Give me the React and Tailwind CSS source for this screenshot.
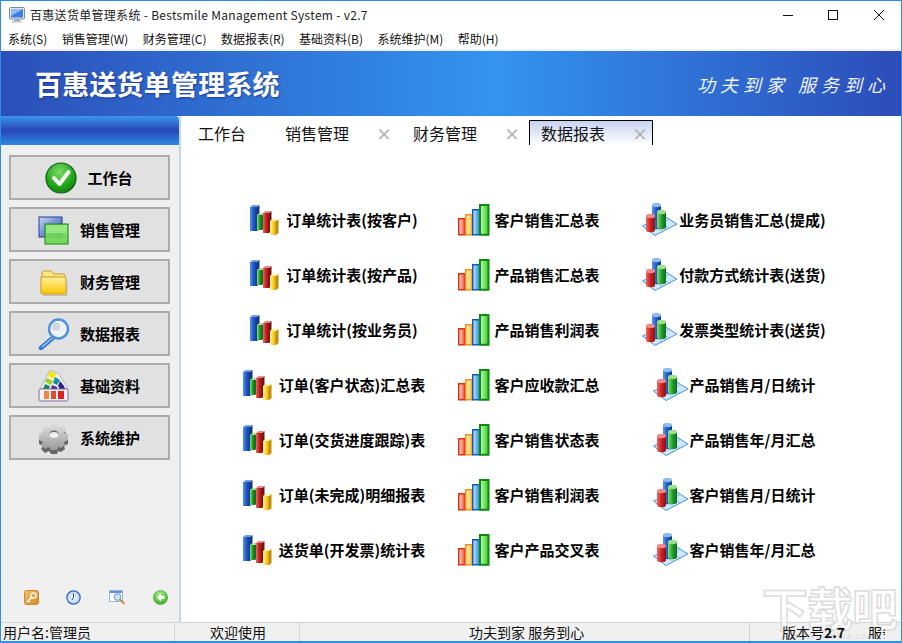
import React from "react";

const Defs = () => (
  <svg className="absolute w-0 h-0" aria-hidden="true">
    <defs>
      <linearGradient id="gBlue" x1="0" x2="1" y1="0" y2="0"><stop offset="0" stopColor="#5c94e8" /><stop offset="0.5" stopColor="#1f58c4" /><stop offset="1" stopColor="#123a94" /></linearGradient>
      <linearGradient id="gGreen" x1="0" x2="1" y1="0" y2="0"><stop offset="0" stopColor="#86e070" /><stop offset="0.55" stopColor="#1d9a28" /><stop offset="1" stopColor="#0c6c24" /></linearGradient>
      <linearGradient id="gRed" x1="0" x2="1" y1="0" y2="0"><stop offset="0" stopColor="#ea6a6a" /><stop offset="0.5" stopColor="#cc2020" /><stop offset="1" stopColor="#861414" /></linearGradient>
      <linearGradient id="gYellow" x1="0" x2="1" y1="0" y2="0"><stop offset="0" stopColor="#fff4a0" /><stop offset="0.6" stopColor="#fcd020" /><stop offset="1" stopColor="#d09a10" /></linearGradient>
      <linearGradient id="fRed" x1="0" x2="1" y1="0" y2="0"><stop offset="0" stopColor="#ffe8e0" /><stop offset="1" stopColor="#f03c24" /></linearGradient>
      <linearGradient id="fOrange" x1="0" x2="1" y1="0" y2="0"><stop offset="0" stopColor="#fff8d0" /><stop offset="1" stopColor="#ffbe30" /></linearGradient>
      <linearGradient id="fBlue" x1="0" x2="1" y1="0" y2="0"><stop offset="0" stopColor="#d8eeff" /><stop offset="1" stopColor="#1f80e8" /></linearGradient>
      <linearGradient id="fGreen" x1="0" x2="1" y1="0" y2="0"><stop offset="0" stopColor="#c8fcb8" /><stop offset="1" stopColor="#30cc20" /></linearGradient>
      <radialGradient id="gCheck" cx="0.45" cy="0.3" r="0.8"><stop offset="0" stopColor="#7fdc6a" /><stop offset="0.6" stopColor="#20a518" /><stop offset="1" stopColor="#0c7010" /></radialGradient>
      <linearGradient id="gFolder" x1="0" x2="0" y1="0" y2="1"><stop offset="0" stopColor="#fff2a0" /><stop offset="1" stopColor="#ffc400" /></linearGradient>
      <linearGradient id="gWin1" x1="0" x2="1" y1="0" y2="1"><stop offset="0" stopColor="#c8d6f6" /><stop offset="1" stopColor="#2448b4" /></linearGradient>
      <linearGradient id="gGear" x1="0" x2="0" y1="0" y2="1"><stop offset="0" stopColor="#e2e2e2" /><stop offset="1" stopColor="#9a9a9a" /></linearGradient>
      <linearGradient id="gKey" x1="0" x2="1" y1="0" y2="1"><stop offset="0" stopColor="#f4c070" /><stop offset="1" stopColor="#d88a20" /></linearGradient>
      <radialGradient id="gClock" cx="0.5" cy="0.5" r="0.6"><stop offset="0" stopColor="#f4f8ff" /><stop offset="0.7" stopColor="#c4d8f6" /><stop offset="1" stopColor="#3a70d0" /></radialGradient>
      <radialGradient id="gBack" cx="0.45" cy="0.3" r="0.8"><stop offset="0" stopColor="#b0f090" /><stop offset="1" stopColor="#28a818" /></radialGradient>
    </defs>
  </svg>
);

const Bar3D = ({ x, y1, y2, w, fill, side, top }) => (
  <g>
    <rect x={x} y={y1} width={w} height={y2 - y1} fill={`url(#${fill})`} />
    <path d={`M${x + w} ${y1}l2.5 -2v${y2 - y1}l-2.5 2z`} fill={side} />
    <path d={`M${x} ${y1}l2.5 -2h${w}l-2.5 2z`} fill={top} />
  </g>
);

const BarsA = () => (
  <svg width="32" height="32" viewBox="0 0 32 32" className="shrink-0">
    <Bar3D x={2} y1={3} y2={27} w={7} fill="gBlue" side="#15357f" top="#6d9fe8" />
    <Bar3D x={9} y1={11} y2={26} w={5} fill="gGreen" side="#1c6a1c" top="#a8e08a" />
    <Bar3D x={15} y1={9} y2={29} w={6} fill="gRed" side="#701414" top="#e88a8a" />
    <Bar3D x={22} y1={17} y2={31} w={6} fill="gYellow" side="#c08c10" top="#fff2a0" />
  </svg>
);

const BarsB = () => (
  <svg width="32" height="32" viewBox="0 0 32 32" className="shrink-0">
    <rect x="0.75" y="14.75" width="6.5" height="16" fill="url(#fRed)" stroke="#e03010" strokeWidth="1.5" />
    <rect x="7.75" y="10.75" width="6.5" height="20" fill="url(#fOrange)" stroke="#f09020" strokeWidth="1.5" />
    <rect x="14.75" y="5.75" width="7" height="25" fill="url(#fBlue)" stroke="#0c5cc0" strokeWidth="1.5" />
    <rect x="22" y="1" width="8.5" height="29.75" fill="url(#fGreen)" stroke="#0c8a10" strokeWidth="2" />
  </svg>
);

const Cyl = ({ x, y1, y2, w, fill, top }) => (
  <g>
    <path d={`M${x} ${y1}v${y2 - y1}a${w / 2} 2.2 0 0 0 ${w} 0v${y1 - y2}z`} fill={`url(#${fill})`} />
    <ellipse cx={x + w / 2} cy={y1} rx={w / 2} ry="2.2" fill={top} />
  </g>
);

const Cyls = () => (
  <svg width="36" height="34" viewBox="0 0 36 34" className="shrink-0">
    <path d="M0.5 23 L22 13 L35 21 L13 32.5 Z" fill="#cfe6fb" stroke="#4a94dc" strokeWidth="1" />
    <path d="M7 20 L20 28 M13 17 L27 25 M6 27 L28 16" stroke="#7ab4ea" strokeWidth="0.8" fill="none" />
    <Cyl x={10} y1={2} y2={24} w={9} fill="gBlue" top="#8fbcf0" />
    <Cyl x={4} y1={13} y2={27} w={9} fill="gRed" top="#ee8a8a" />
    <Cyl x={15} y1={9} y2={24} w={9} fill="gGreen" top="#9ce08a" />
  </svg>
);

const IconCheck = () => (
  <svg width="32" height="32" viewBox="0 0 32 32" className="shrink-0">
    <circle cx="16" cy="16" r="15" fill="url(#gCheck)" stroke="#0d5f12" strokeWidth="1.2" />
    <path d="M9 16l5.5 6 9-12" fill="none" stroke="#f4f4f4" strokeWidth="4" strokeLinecap="round" strokeLinejoin="round" />
  </svg>
);
const IconWins = () => (
  <svg width="32" height="32" viewBox="0 0 32 32" className="shrink-0">
    <rect x="1" y="3" width="23" height="20" fill="url(#gWin1)" stroke="#1c3f9c" strokeWidth="1" />
    <rect x="7" y="10" width="23" height="20" fill="#6fd856" fillOpacity="0.92" stroke="#108a0c" strokeWidth="1" />
    <rect x="8" y="11" width="21" height="8" fill="#a8ec94" fillOpacity="0.7" />
  </svg>
);
const IconFolder = () => (
  <svg width="32" height="32" viewBox="0 0 32 32" className="shrink-0">
    <path d="M4 7q0-2 2-2h7l3 3h9q2 0 2 2v3H4z" fill="#ffe680" stroke="#c89a20" />
    <path d="M3 11h23q2 0 2 2v15H5q-2 0-2-2z" fill="url(#gFolder)" stroke="#c89a20" />
    <path d="M5 29.5h24V14" fill="none" stroke="#bdbdbd" />
  </svg>
);
const IconLens = () => (
  <svg width="32" height="32" viewBox="0 0 32 32" className="shrink-0">
    <path d="M17 18L3 30" stroke="#2f78d0" strokeWidth="4.5" strokeLinecap="round" />
    <path d="M15.5 19L4 29" stroke="#a8cdf4" strokeWidth="1.2" />
    <circle cx="20.5" cy="11" r="9.5" fill="#eef2f6" stroke="#4d90dc" strokeWidth="2.4" />
    <circle cx="18" cy="8.5" r="4" fill="#cdd6de" />
  </svg>
);
const IconPalette = () => (
  <svg width="32" height="32" viewBox="0 0 32 32" className="shrink-0">
    <path d="M12 0l9 4 9 15H2z" fill="#f2f2f2" stroke="#8a8aa8" strokeWidth="0.6" />
    <path d="M12 1l6 3-2 5-6-3z" fill="#f8e800" />
    <path d="M9 8l6 3-2 4-6-3z" fill="#a4cc20" />
    <path d="M17 7l5 3-3 5-4-2z" fill="#1090a8" />
    <path d="M7 14l5 2-1 3H5z" fill="#188a60" />
    <path d="M14 15l5 2v2h-6z" fill="#482a90" />
    <path d="M22 11l4 5 1 3h-5l-2-3z" fill="#30208a" />
    <rect x="1" y="19" width="29" height="12" rx="1.5" fill="#f4f0f4" stroke="#7a6a9a" />
    <rect x="6" y="21" width="5" height="8" fill="#e88a40" />
    <rect x="13" y="21" width="5" height="8" fill="#d85030" />
    <rect x="20" y="21" width="6" height="8" fill="#e02020" />
  </svg>
);
const gearPath = "M13 1h6l1 4 4-2 4 4-2 4 4 1v6l-4 2 1 3-4 3-3-1-1 3h-6l-2-3-4 2-4-4 2-3-4-2v-6l4-1-1-4 4-3 4 2z";
const IconGear = () => (
  <svg width="32" height="32" viewBox="0 0 32 32" className="shrink-0">
    <path d={gearPath} fill="#666" transform="translate(0 4)" />
    <path d={gearPath} fill="url(#gGear)" />
    <ellipse cx="16" cy="12" rx="4.5" ry="3.5" fill="#6a6a6a" />
    <ellipse cx="16" cy="13" rx="4.5" ry="3" fill="#f0f0f0" />
  </svg>
);
const IconKey = () => (
  <svg width="15" height="15" viewBox="0 0 15 15">
    <rect x="0.5" y="0.5" width="14" height="14" rx="2" fill="url(#gKey)" stroke="#c88a30" />
    <circle cx="9.5" cy="5.5" r="2.6" fill="none" stroke="#fff" strokeWidth="1.3" />
    <path d="M7.5 7.5L3 12M4.5 10.5l1.5 1.5" stroke="#fff" strokeWidth="1.3" fill="none" />
  </svg>
);
const IconClock = () => (
  <svg width="15" height="15" viewBox="0 0 15 15">
    <circle cx="7.5" cy="7.5" r="6.7" fill="url(#gClock)" stroke="#3566c4" strokeWidth="1.2" />
    <path d="M7.5 3.5v4l-1.5 2.5" fill="none" stroke="#24408a" />
  </svg>
);
const IconWinLens = () => (
  <svg width="17" height="15" viewBox="0 0 17 15">
    <rect x="0.5" y="0.5" width="13" height="11" fill="#fff" stroke="#9ab4dc" />
    <rect x="1" y="1" width="12" height="2" fill="#5a90dc" />
    <circle cx="8.5" cy="7" r="3.4" fill="#bfe4fa" stroke="#7a96c0" />
    <path d="M11 9.5l4.5 4.5" stroke="#d09030" strokeWidth="1.8" />
  </svg>
);
const IconBack = () => (
  <svg width="15" height="15" viewBox="0 0 15 15">
    <circle cx="7.5" cy="7.5" r="7" fill="url(#gBack)" stroke="#2a9a1c" strokeWidth="0.6" />
    <path d="M8 3.5L4 7.5l4 4V9h3.5V6H8z" fill="#fff" />
  </svg>
);
const IconMonitor = () => (
  <svg width="16" height="16" viewBox="0 0 16 16">
    <rect x="0.5" y="0.5" width="15" height="11.5" rx="1" fill="#e4e8ee" stroke="#7c8aa0" />
    <rect x="2" y="2" width="12" height="8.5" fill="#3d7fe0" />
    <path d="M2 2h12L2 9z" fill="#8fbcf4" />
    <rect x="5" y="12.5" width="6" height="1.5" fill="#9aa4b0" />
    <rect x="3" y="14" width="10" height="1.5" fill="#bcc4cc" />
  </svg>
);

const menus = ["系统(S)", "销售管理(W)", "财务管理(C)", "数据报表(R)", "基础资料(B)", "系统维护(M)", "帮助(H)"];

const sideItems = [
  ["工作台", IconCheck],
  ["销售管理", IconWins],
  ["财务管理", IconFolder],
  ["数据报表", IconLens],
  ["基础资料", IconPalette],
  ["系统维护", IconGear],
];

const rows = [
  [["订单统计表(按客户)", "A"], ["客户销售汇总表", "B"], ["业务员销售汇总(提成)", "C"]],
  [["订单统计表(按产品)", "A"], ["产品销售汇总表", "B"], ["付款方式统计表(送货)", "C"]],
  [["订单统计(按业务员)", "A"], ["产品销售利润表", "B"], ["发票类型统计表(送货)", "C"]],
  [["订单(客户状态)汇总表", "A"], ["客户应收款汇总", "B"], ["产品销售月/日统计", "C"]],
  [["订单(交货进度跟踪)表", "A"], ["客户销售状态表", "B"], ["产品销售年/月汇总", "C"]],
  [["订单(未完成)明细报表", "A"], ["客户销售利润表", "B"], ["客户销售月/日统计", "C"]],
  [["送货单(开发票)统计表", "A"], ["客户产品交叉表", "B"], ["客户销售年/月汇总", "C"]],
];

const Report = ({ label, kind }) => (
  <div className={`h-[55px] flex items-center justify-center ${kind === "A" ? "gap-[6px]" : kind === "B" ? "gap-[4px]" : "gap-[1px]"}`}>
    {kind === "A" ? <BarsA /> : kind === "B" ? <BarsB /> : <Cyls />}
    <span className="text-[15px] font-bold text-black whitespace-nowrap leading-none">{label}</span>
  </div>
);

const Tab = ({ label, close, active, w }) => (
  <div className={`h-[25px] flex items-center shrink-0 ${w} ${active ? "border-t border-x border-black bg-gradient-to-b from-[#c6d2ef] to-white pl-[11px]" : ""}`}>
    <span className="text-[16px] leading-none text-[#111] whitespace-nowrap">{label}</span>
    {close && <span className="text-[#b4b4b4] text-[16px] leading-none font-bold ml-[27px]">×</span>}
  </div>
);

export default function App() {
  return (
    <div className="relative w-[902px] h-[643px] flex flex-col overflow-hidden bg-white border-t border-x border-b-2 border-[#2b8fe6] font-['Noto_Sans_CJK_SC','Noto_Sans',sans-serif]">
      <Defs />
      <div className="h-[28px] flex items-center shrink-0 pl-[8px]">
        <IconMonitor />
        <span className="ml-[5px] text-[12px] text-[#222] tracking-[0.3px] whitespace-nowrap">百惠送货单管理系统 - Bestsmile Management System - v2.7</span>
        <div className="ml-auto flex items-center">
          <svg width="12" height="12" viewBox="0 0 12 12" className="mr-[33px]"><path d="M1 6.5h10" stroke="#111" /></svg>
          <svg width="12" height="12" viewBox="0 0 12 12" className="mr-[34px]"><rect x="1.5" y="1.5" width="9" height="9" fill="none" stroke="#111" /></svg>
          <svg width="12" height="12" viewBox="0 0 12 12" className="mr-[16px]"><path d="M1 1l10 10M11 1L1 11" stroke="#111" /></svg>
        </div>
      </div>
      <div className="h-[20px] shrink-0 flex items-center pl-[7px] gap-[14.4px] text-[12px] text-[#111]">
        {menus.map((m) => <span key={m} className="whitespace-nowrap leading-none">{m}</span>)}
      </div>
      <div className="h-[2px] shrink-0 bg-[#f0f0f0]" />
      <div className="h-[65px] shrink-0 flex items-center justify-between pl-[34px] pr-[11px] bg-gradient-to-r from-[#2c4fb9] via-[#3394ef] via-55% to-[#2c4cb9]">
        <span className="text-[27px] font-bold text-white leading-none tracking-[0.2px] [text-shadow:1px_1px_2px_rgba(20,40,120,0.7)]">百惠送货单管理系统</span>
        <span className="text-[18px] italic text-[#eef3fb] tracking-[5px] leading-none whitespace-nowrap">功夫到家 服务到心</span>
      </div>
      <div className="flex-1 flex min-h-0">
        <aside className="w-[180px] shrink-0 flex flex-col bg-[#f0f0f0] border-r-2 border-[#c4d8f0]">
          <div className="h-[29px] shrink-0 rounded-tr-[4px] bg-gradient-to-b from-[#3a96ec] via-[#2a46b6] to-[#2f8ae4]" />
          <div className="flex flex-col gap-[7px] pt-[10px] pl-[8px] pr-[8px]">
            {sideItems.map(([label, Ico]) => (
              <div key={label} className="h-[45px] w-[161px] flex items-center justify-center gap-[10px] pr-[1px] bg-[#e1e1e1] border-2 border-[#ababab]">
                <Ico />
                <span className="text-[15px] font-bold text-black leading-none">{label}</span>
              </div>
            ))}
          </div>
          <div className="mt-auto mb-[17px] pl-[23px] w-[167px] flex justify-between items-center">
            <IconKey />
            <IconClock />
            <IconWinLens />
            <IconBack />
          </div>
        </aside>
        <main className="flex-1 min-w-0 flex flex-col">
          <div className="h-[29px] shrink-0 flex pt-[4px] pl-[17px]">
            <Tab label="工作台" w="w-[87px]" />
            <Tab label="销售管理" close w="w-[128px]" />
            <Tab label="财务管理" close w="w-[116px]" />
            <Tab label="数据报表" close active w="w-[124px]" />
          </div>
          <div className="pt-[47px] pl-[52px] grid grid-cols-[200px_192px_218px]">
            {rows.flat().map(([label, kind]) => <Report key={label} label={label} kind={kind} />)}
          </div>
        </main>
      </div>
      <div className="h-[19px] shrink-0 flex items-center bg-[#f0f0f0] border-t border-[#d4d4d4] text-[14px] text-[#111] leading-none">
        <div className="w-[174px] h-full flex items-center pl-[2px] border-r border-[#d4d4d4] whitespace-nowrap">用户名:管理员</div>
        <div className="w-[125px] h-full flex items-center pl-[35px] border-r border-[#d4d4d4] whitespace-nowrap">欢迎使用</div>
        <div className="w-[450px] h-full flex items-center pl-[169px] border-r border-[#d4d4d4] whitespace-nowrap">功夫到家 服务到心</div>
        <div className="relative z-10 flex-1 min-w-0 h-full flex items-center pl-[32px] overflow-hidden whitespace-nowrap">
          版本号<b className="font-bold">2.7</b><span className="ml-[23px] w-[17px] overflow-hidden">服务</span>
        </div>
      </div>
      <div className="absolute right-[4px] bottom-[1px] flex flex-col items-center pointer-events-none">
        <span className="text-[46px] font-bold leading-[50px] tracking-[-1px] text-white/70 [-webkit-text-stroke:1.5px_#dcdcdc]">下载吧</span>
        <span className="text-[9px] leading-none text-[#dadada] tracking-[1px]">www.xiazaiba.com</span>
      </div>
    </div>
  );
}
